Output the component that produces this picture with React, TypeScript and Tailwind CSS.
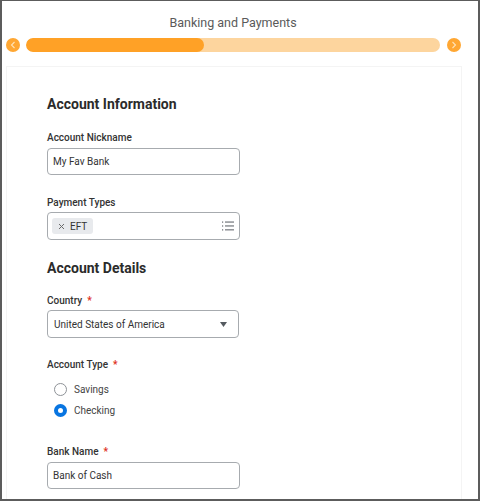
import React from "react";

const Label = ({ text, required, className = "" }: { text: string; required?: boolean; className?: string }) => (
  <div className={`text-[10px] leading-[14px] font-medium text-[#333333] ${className}`}>
    {text}
    {required && <span className="text-[#de2e21] ml-[5px] font-bold">*</span>}
  </div>
);

export default function App() {
  return (
    <div
      className="w-[480px] h-[501px] overflow-hidden bg-white border-t border-l-2 border-r-2 border-b-2 border-[#5c5c5c] box-border"
      style={{ fontFamily: "Roboto, 'Liberation Sans', sans-serif" }}
    >
      {/* Title */}
      <div className="h-[37px] pt-[13px] flex justify-center text-[12.5px] leading-[18px] text-[#5a5a5a] pr-[14px]">
        Banking and Payments
      </div>
      {/* Progress */}
      <div className="flex items-center h-[14px] pl-[4px]">
        <div className="w-[14px] h-[14px] rounded-full bg-[#ffa733] flex items-center justify-center">
          <svg width="6" height="8" viewBox="0 0 6 8">
            <path d="M4.5 1 L1.5 4 L4.5 7" stroke="#ffe3b8" strokeWidth="1.1" fill="none" />
          </svg>
        </div>
        <div className="ml-[6px] w-[414px] h-[14px] rounded-full bg-[#fdd59e] overflow-hidden">
          <div className="h-full w-[178px] rounded-full bg-[#ffa126]" />
        </div>
        <div className="ml-[7px] w-[14px] h-[14px] rounded-full bg-[#ffa733] flex items-center justify-center">
          <svg width="6" height="8" viewBox="0 0 6 8">
            <path d="M1.5 1 L4.5 4 L1.5 7" stroke="#ffe3b8" strokeWidth="1.1" fill="none" />
          </svg>
        </div>
      </div>
      {/* Card */}
      <div className="mt-[14px] ml-[4px] w-[456px] h-[480px] border border-[#f4f4f4] pl-[40px] pt-[27px]">
        <div className="text-[14px] leading-[20px] font-bold text-[#2b2b2b]">Account Information</div>

        <Label text="Account Nickname" className="mt-[17px]" />
        <div className="mt-[3px] w-[193px] h-[27px] border border-[#a7abaf] rounded-[4px] flex items-center px-[5px] text-[10px] text-[#333333]">
          My Fav Bank
        </div>

        <Label text="Payment Types" className="mt-[21px]" />
        <div className="mt-[2px] w-[193px] h-[28px] border border-[#a7abaf] rounded-[4px] flex items-center pl-[4px] pr-[5px]">
          <div className="h-[16px] w-[41px] rounded-[3px] bg-[#e8eaed] flex items-center pl-[6px] text-[10px] text-[#333333]">
            <svg width="7" height="7" viewBox="0 0 7 7" className="mr-[5px]">
              <path d="M1 1 L6 6 M6 1 L1 6" stroke="#6b6b6b" strokeWidth="1" />
            </svg>
            EFT
          </div>
          <div className="flex-1" />
          <svg width="12" height="10" viewBox="0 0 12 10">
            <g fill="#666a70">
              <rect x="0" y="0.5" width="1.2" height="1.2" />
              <rect x="0" y="4.4" width="1.2" height="1.2" />
              <rect x="0" y="8.3" width="1.2" height="1.2" />
              <rect x="3" y="0.5" width="9" height="1.1" />
              <rect x="3" y="4.4" width="9" height="1.1" />
              <rect x="3" y="8.3" width="9" height="1.1" />
            </g>
          </svg>
        </div>

        <div className="mt-[18px] text-[14px] leading-[20px] font-bold text-[#2b2b2b]">Account Details</div>

        <Label text="Country" required className="mt-[16px]" />
        <div className="mt-[2px] w-[192px] h-[28px] border border-[#a7abaf] rounded-[4px] flex items-center pl-[6px] pr-[11px] text-[10px] text-[#333333]">
          <span>United States of America</span>
          <div className="flex-1" />
          <svg width="7" height="5" viewBox="0 0 7 5">
            <path d="M0 0 H7 L3.5 5 Z" fill="#555a60" />
          </svg>
        </div>

        <Label text="Account Type" required className="mt-[20px]" />
        <div className="mt-[7px] flex flex-col">
          <div className="h-[21px] flex items-center pl-[7px]">
            <div className="w-[13px] h-[13px] rounded-full border border-[#8e9297] bg-white" />
            <span className="ml-[7px] text-[10px] text-[#444444]">Savings</span>
          </div>
          <div className="h-[21px] flex items-center pl-[7px]">
            <div className="w-[13px] h-[13px] rounded-full border-[4px] border-[#0875e1] bg-white" />
            <span className="ml-[7px] text-[10px] text-[#444444]">Checking</span>
          </div>
        </div>

        <Label text="Bank Name" required className="mt-[24px]" />
        <div className="mt-[3px] w-[193px] h-[27px] border border-[#a7abaf] rounded-[4px] flex items-center px-[5px] text-[10px] text-[#333333]">
          Bank of Cash
        </div>
      </div>
    </div>
  );
}
